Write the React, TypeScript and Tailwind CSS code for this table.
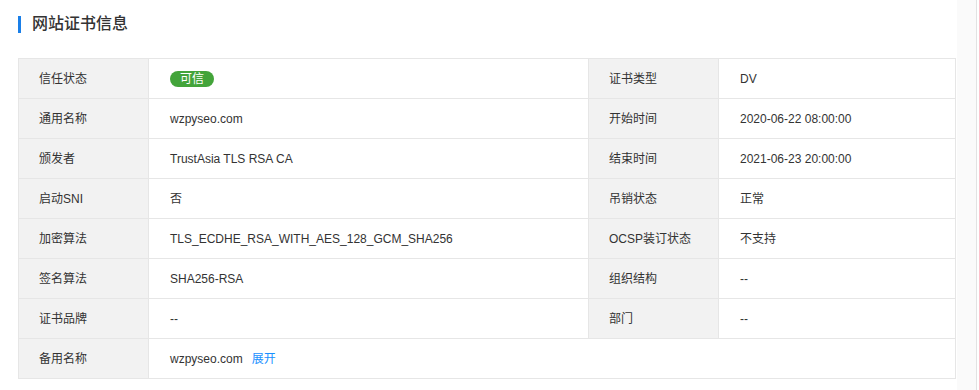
import React from "react";

const rows: [string, React.ReactNode, string, string][] = [
  ["信任状态", "badge", "证书类型", "DV"],
  ["通用名称", "wzpyseo.com", "开始时间", "2020-06-22 08:00:00"],
  ["颁发者", "TrustAsia TLS RSA CA", "结束时间", "2021-06-23 20:00:00"],
  ["启动SNI", "否", "吊销状态", "正常"],
  ["加密算法", "TLS_ECDHE_RSA_WITH_AES_128_GCM_SHA256", "OCSP装订状态", "不支持"],
  ["签名算法", "SHA256-RSA", "组织结构", "--"],
  ["证书品牌", "--", "部门", "--"],
];

const labelCls = "h-[40px] border border-[#e6e6e6] bg-[#f2f2f2] pl-[20px] text-left font-normal";
const valueCls = "h-[40px] border border-[#e6e6e6] bg-white pl-[21px] text-left";

export default function App() {
  return (
    <div
      className="flex h-[390px] w-[979px] bg-white text-[12px] text-[#333]"
      style={{ fontFamily: '"Liberation Sans", "Noto Sans CJK SC", sans-serif' }}
    >
      <div className="flex-1 pl-[18px] pr-[1px]">
        {/* title */}
        <div className="flex h-[46px] items-center gap-[11px] pt-[2px]">
          <div className="h-[17px] w-[3px] bg-[#1a7fe8]"></div>
          <h2 className="text-[16px] font-medium text-[#333]">网站证书信息</h2>
        </div>
        <table className="mt-[12px] w-[938px] table-fixed border-collapse">
          <colgroup>
            <col className="w-[130px]" />
            <col className="w-[440px]" />
            <col className="w-[130px]" />
            <col />
          </colgroup>
          <tbody>
            {rows.map((row, i) => (
              <tr key={i}>
                <th className={labelCls}>{row[0]}</th>
                <td className={valueCls}>
                  {row[1] === "badge" ? (
                    <span className="inline-flex h-[16px] items-center rounded-full bg-[#43a43a] px-[10px] text-[12px] leading-none text-white">
                      可信
                    </span>
                  ) : (
                    row[1]
                  )}
                </td>
                <th className={labelCls}>{row[2]}</th>
                <td className={valueCls}>{row[3]}</td>
              </tr>
            ))}
            <tr>
              <th className={labelCls}>备用名称</th>
              <td className={valueCls} colSpan={3}>
                wzpyseo.com
                <span className="ml-[9px] text-[#1890ff]">展开</span>
              </td>
            </tr>
          </tbody>
        </table>
      </div>
      {/* scrollbar track */}
      <div className="w-[22px] pr-[2px]">
        <div className="h-full border-r border-[#e2e2e2] bg-[#fafafa]"></div>
      </div>
    </div>
  );
}
